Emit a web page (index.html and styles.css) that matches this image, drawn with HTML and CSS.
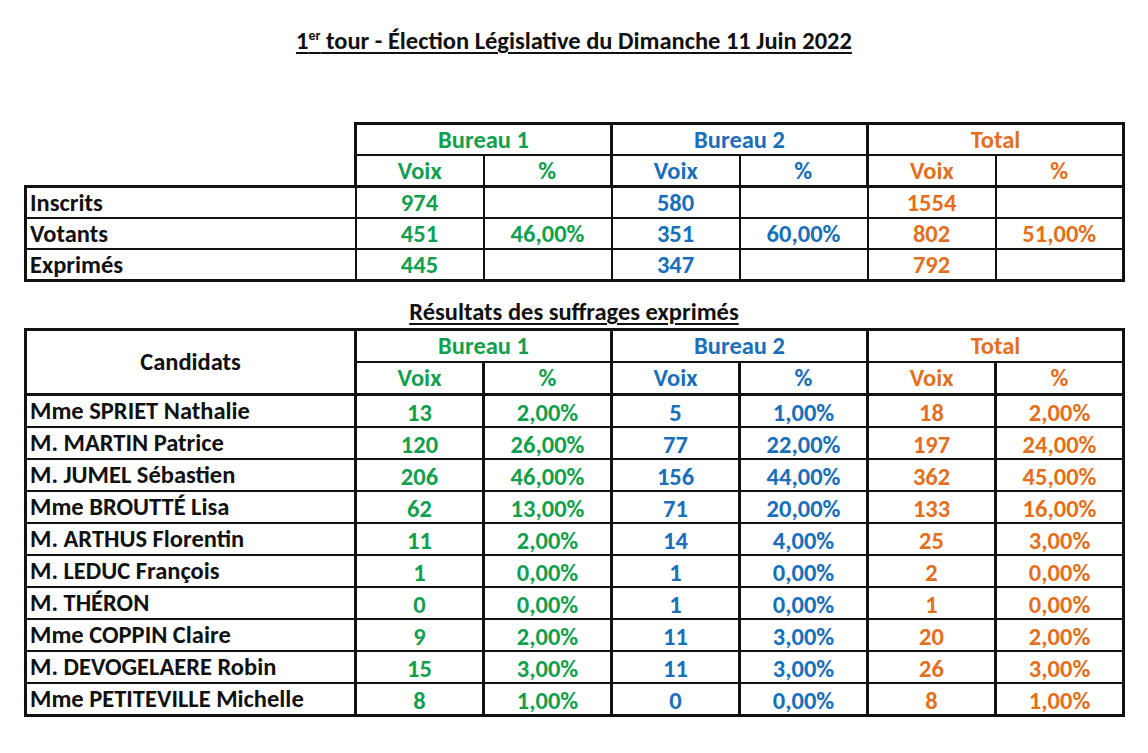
FILE: index.html
```html
<!DOCTYPE html>
<html lang="fr">
<head>
<meta charset="utf-8">
<title>1er tour - Élection Législative</title>
<link rel="stylesheet" href="styles.css">
</head>
<body>
<div class="page">
  <h1 class="title">1<sup>er</sup> tour - Élection Législative du Dimanche 11 Juin 2022</h1>

  <table class="grid grid-top">
    <colgroup>
      <col class="c-label"><col class="c-num"><col class="c-num"><col class="c-num"><col class="c-num"><col class="c-num"><col class="c-num">
    </colgroup>
    <tr class="hrow">
      <td class="blank" rowspan="2"></td>
      <td colspan="2" class="g grp">Bureau 1</td>
      <td colspan="2" class="b grp">Bureau 2</td>
      <td colspan="2" class="o grp">Total</td>
    </tr>
    <tr class="hrow sub">
      <td class="g">Voix</td><td class="g">%</td>
      <td class="b">Voix</td><td class="b">%</td>
      <td class="o">Voix</td><td class="o">%</td>
    </tr>
    <tr class="first">
      <td class="lbl">Inscrits</td>
      <td class="g">974</td><td class="g"></td>
      <td class="b">580</td><td class="b"></td>
      <td class="o">1554</td><td class="o"></td>
    </tr>
    <tr>
      <td class="lbl">Votants</td>
      <td class="g">451</td><td class="g">46,00%</td>
      <td class="b">351</td><td class="b">60,00%</td>
      <td class="o">802</td><td class="o">51,00%</td>
    </tr>
    <tr>
      <td class="lbl">Exprimés</td>
      <td class="g">445</td><td class="g"></td>
      <td class="b">347</td><td class="b"></td>
      <td class="o">792</td><td class="o"></td>
    </tr>
  </table>

  <h2 class="subtitle">Résultats des suffrages exprimés</h2>

  <table class="grid grid-res">
    <colgroup>
      <col class="c-label"><col class="c-num"><col class="c-num"><col class="c-num"><col class="c-num"><col class="c-num"><col class="c-num">
    </colgroup>
    <tr class="hrow">
      <td class="cand" rowspan="2">Candidats</td>
      <td colspan="2" class="g grp">Bureau 1</td>
      <td colspan="2" class="b grp">Bureau 2</td>
      <td colspan="2" class="o grp">Total</td>
    </tr>
    <tr class="hrow sub">
      <td class="g">Voix</td><td class="g">%</td>
      <td class="b">Voix</td><td class="b">%</td>
      <td class="o">Voix</td><td class="o">%</td>
    </tr>
    <tr class="first">
      <td class="lbl">Mme SPRIET Nathalie</td>
      <td class="g">13</td><td class="g">2,00%</td>
      <td class="b">5</td><td class="b">1,00%</td>
      <td class="o">18</td><td class="o">2,00%</td>
    </tr>
    <tr>
      <td class="lbl">M. MARTIN Patrice</td>
      <td class="g">120</td><td class="g">26,00%</td>
      <td class="b">77</td><td class="b">22,00%</td>
      <td class="o">197</td><td class="o">24,00%</td>
    </tr>
    <tr>
      <td class="lbl">M. JUMEL Sébastien</td>
      <td class="g">206</td><td class="g">46,00%</td>
      <td class="b">156</td><td class="b">44,00%</td>
      <td class="o">362</td><td class="o">45,00%</td>
    </tr>
    <tr>
      <td class="lbl">Mme BROUTTÉ Lisa</td>
      <td class="g">62</td><td class="g">13,00%</td>
      <td class="b">71</td><td class="b">20,00%</td>
      <td class="o">133</td><td class="o">16,00%</td>
    </tr>
    <tr>
      <td class="lbl">M. ARTHUS Florentin</td>
      <td class="g">11</td><td class="g">2,00%</td>
      <td class="b">14</td><td class="b">4,00%</td>
      <td class="o">25</td><td class="o">3,00%</td>
    </tr>
    <tr>
      <td class="lbl">M. LEDUC François</td>
      <td class="g">1</td><td class="g">0,00%</td>
      <td class="b">1</td><td class="b">0,00%</td>
      <td class="o">2</td><td class="o">0,00%</td>
    </tr>
    <tr>
      <td class="lbl">M. THÉRON</td>
      <td class="g">0</td><td class="g">0,00%</td>
      <td class="b">1</td><td class="b">0,00%</td>
      <td class="o">1</td><td class="o">0,00%</td>
    </tr>
    <tr>
      <td class="lbl">Mme COPPIN Claire</td>
      <td class="g">9</td><td class="g">2,00%</td>
      <td class="b">11</td><td class="b">3,00%</td>
      <td class="o">20</td><td class="o">2,00%</td>
    </tr>
    <tr>
      <td class="lbl">M. DEVOGELAERE Robin</td>
      <td class="g">15</td><td class="g">3,00%</td>
      <td class="b">11</td><td class="b">3,00%</td>
      <td class="o">26</td><td class="o">3,00%</td>
    </tr>
    <tr>
      <td class="lbl">Mme PETITEVILLE Michelle</td>
      <td class="g">8</td><td class="g">1,00%</td>
      <td class="b">0</td><td class="b">0,00%</td>
      <td class="o">8</td><td class="o">1,00%</td>
    </tr>
  </table>
</div>
</body>
</html>
```
FILE: styles.css
```css
html, body {
  margin: 0;
  padding: 0;
  background: #ffffff;
}

body {
  font-family: "Carlito", "Calibri", "Lato", "Liberation Sans", sans-serif;
  font-weight: 700;
  color: #111111;
}

.page {
  width: 1100px;
  padding: 27px 0 0 24px;
}

.title {
  margin: 0;
  font-size: 24.5px;
  font-weight: 700;
  text-align: center;
  text-decoration: underline;
  text-underline-offset: 3px;
  text-decoration-thickness: 2px;
  line-height: 28px;
  color: #111111;
}

.title sup {
  font-size: 14px;
  line-height: 0;
  vertical-align: 9px;
}

.subtitle {
  margin: 0;
  font-size: 24.5px;
  font-weight: 700;
  text-align: center;
  text-decoration: underline;
  text-underline-offset: 3px;
  text-decoration-thickness: 2px;
  line-height: 26px;
  padding: 17px 0 3px;
  color: #111111;
}

.grid {
  width: 1100px;
  border-collapse: collapse;
  table-layout: fixed;
  font-size: 24.5px;
}

.grid-top {
  margin-top: 67px;
}

.c-label { width: 330px; }
.c-num { width: 128px; }

.grid td {
  height: 30px;
  padding: 0;
  border: 2px solid #111111;
  text-align: center;
  vertical-align: middle;
  line-height: 24px;
}

.grid-top td { height: 29px; }

.grid tr > td:first-child { border-left-width: 3px; }
.grid tr > td:last-child { border-right-width: 3px; }
.grid tr:first-child td { border-top-width: 3px; }
.grid tr:last-child td { border-bottom-width: 3px; }
.grid tr.first td { border-top-width: 3px; }

.grid .grp { border-left-width: 3px; border-right-width: 3px; }
.grid tr.sub td:nth-child(2n+1) { border-left-width: 3px; }

.grid-top td.blank {
  border-top: none;
  border-left: none;
}

.grid td.lbl {
  text-align: left;
  padding-left: 3px;
  color: #111111;
}

.grid td.cand {
  color: #111111;
  border-bottom-width: 3px;
}

.grid-res td { border-left-width: 3px; border-right-width: 3px; }
.grid-res td.g, .grid-res td.b, .grid-res td.o { padding-top: 4px; height: 26px; }
.grid-res tr.hrow td { padding-top: 0; height: 30px; }

.g { color: #12a04f; }
.b { color: #1a6fba; }
.o { color: #e2701e; }
```
